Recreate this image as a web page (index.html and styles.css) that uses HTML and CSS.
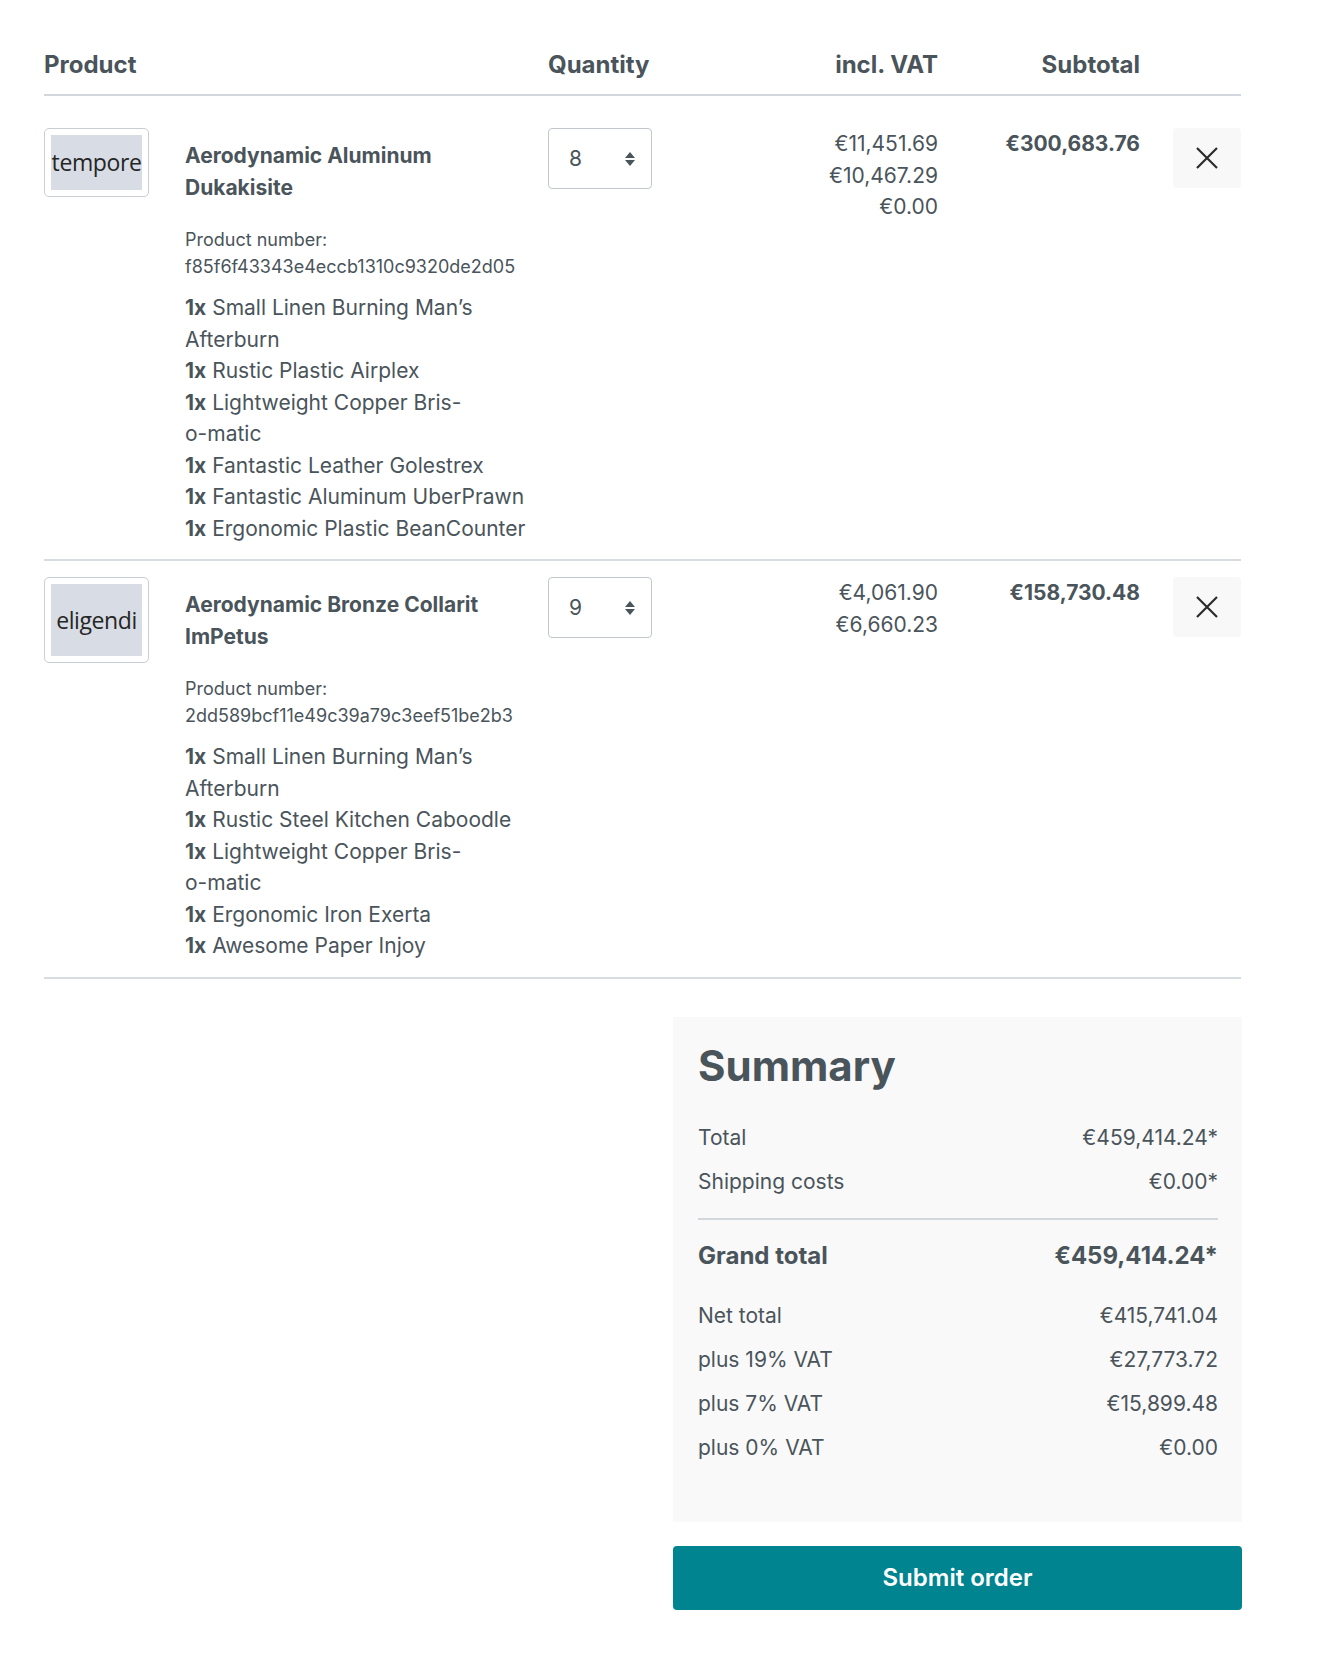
FILE: index.html
```html
<!DOCTYPE html>
<html lang="en">
<head>
<meta charset="UTF-8">
<title>Checkout</title>
<link rel="stylesheet" href="styles.css">
</head>
<body>
<div class="page">
<div class="cart">
<div class="cart-header">
<div>Product</div>
<div>Quantity</div>
<div class="num">incl. VAT</div>
<div class="num">Subtotal</div>
<div></div>
</div>

<div class="line-item">
<div class="item-product">
<div class="thumb thumb-short"><span>tempore</span></div>
<div class="details">
<div class="item-name">Aerodynamic Aluminum Dukakisite</div>
<div class="item-number">Product number:<br>f85f6f43343e4eccb1310c9320de2d05</div>
<ul class="bundle">
<li><b>1x</b> Small Linen Burning Man’s Afterburn</li>
<li><b>1x</b> Rustic Plastic Airplex</li>
<li><b>1x</b> Lightweight Copper Bris-<span class="nowrap">o-matic</span></li>
<li><b>1x</b> Fantastic Leather Golestrex</li>
<li><b>1x</b> Fantastic Aluminum UberPrawn</li>
<li><b>1x</b> Ergonomic Plastic BeanCounter</li>
</ul>
</div>
</div>
<div class="item-qty">
<div class="qty-select">8
<svg width="12" height="16" viewBox="0 0 12 16"><path d="M1 7 6 1l5 6zM1 9l5 6 5-6z" fill="#4a545b"/></svg>
</div>
</div>
<div class="item-price">€11,451.69<br>€10,467.29<br>€0.00</div>
<div class="item-total">€300,683.76</div>
<div class="item-remove">
<button type="button" class="btn-remove">
<svg width="24" height="24" viewBox="0 0 24 24"><path d="M2 2l20 20M22 2 2 22" stroke="#2b2b2b" stroke-width="2.2" fill="none"/></svg>
</button>
</div>
</div>

<div class="line-item">
<div class="item-product">
<div class="thumb thumb-tall"><span>eligendi</span></div>
<div class="details">
<div class="item-name">Aerodynamic Bronze Collarit ImPetus</div>
<div class="item-number">Product number:<br>2dd589bcf11e49c39a79c3eef51be2b3</div>
<ul class="bundle">
<li><b>1x</b> Small Linen Burning Man’s Afterburn</li>
<li><b>1x</b> Rustic Steel Kitchen Caboodle</li>
<li><b>1x</b> Lightweight Copper Bris-<span class="nowrap">o-matic</span></li>
<li><b>1x</b> Ergonomic Iron Exerta</li>
<li><b>1x</b> Awesome Paper Injoy</li>
</ul>
</div>
</div>
<div class="item-qty">
<div class="qty-select">9
<svg width="12" height="16" viewBox="0 0 12 16"><path d="M1 7 6 1l5 6zM1 9l5 6 5-6z" fill="#4a545b"/></svg>
</div>
</div>
<div class="item-price">€4,061.90<br>€6,660.23</div>
<div class="item-total">€158,730.48</div>
<div class="item-remove">
<button type="button" class="btn-remove">
<svg width="24" height="24" viewBox="0 0 24 24"><path d="M2 2l20 20M22 2 2 22" stroke="#2b2b2b" stroke-width="2.2" fill="none"/></svg>
</button>
</div>
</div>
</div>

<div class="summary-wrap">
<div class="summary">
<h2>Summary</h2>
<div class="sum-row"><span>Total</span><span>€459,414.24*</span></div>
<div class="sum-row"><span>Shipping costs</span><span>€0.00*</span></div>
<hr>
<div class="sum-row sum-grand"><span>Grand total</span><span>€459,414.24*</span></div>
<div class="sum-tax">
<div class="sum-row"><span>Net total</span><span>€415,741.04</span></div>
<div class="sum-row"><span>plus 19% VAT</span><span>€27,773.72</span></div>
<div class="sum-row"><span>plus 7% VAT</span><span>€15,899.48</span></div>
<div class="sum-row"><span>plus 0% VAT</span><span>€0.00</span></div>
</div>
</div>
<button type="button" class="btn-order">Submit order</button>
</div>
</div>
</body>
</html>
```

FILE: styles.css
```css
html, body { margin: 0; padding: 0; }
body { font-family: Inter, "Noto Sans", sans-serif; font-size: 21px; line-height: 1.5; color: #4a545b; background: #fff; }
.page { width: 1197px; padding: 49px 0 60px 44px; }
.nowrap { white-space: nowrap; }

/* cart table */
.cart-header, .line-item { display: grid; grid-template-columns: 504px 190px 200px 202px 1fr; }
.cart-header { font-size: 24px; font-weight: 700; line-height: 32px; padding-bottom: 13px; border-bottom: 2px solid #d1d7dc; margin-bottom: 16px; }
.cart-header .num { text-align: right; }
.line-item { padding: 16px 0 15px; border-bottom: 2px solid #d7dce0; }

.item-product { display: flex; }
.thumb { width: 105px; box-sizing: border-box; border: 1.5px solid #c9ced3; border-radius: 5px; padding: 6px; flex-shrink: 0; }
.thumb span { display: flex; align-items: center; justify-content: center; height: 100%; background: #d8dce4; color: #262626; font-family: "Open Sans", sans-serif; font-size: 23px; letter-spacing: -0.4px; overflow: hidden; white-space: nowrap; }
.thumb-short { height: 69px; }
.thumb-tall { height: 86px; }

.details { margin-left: 36px; width: 352px; }
.item-name { font-weight: 700; padding-top: 12px; }
.item-number { font-size: 18px; line-height: 27px; margin-top: 23px; }
.bundle { list-style: none; margin: 12px 0 0; padding: 0; }
.bundle b { font-weight: 700; }

.qty-select { width: 104px; height: 61px; box-sizing: border-box; border: 1.5px solid #c1c7cd; border-radius: 4px; padding: 0 15px 0 20px; display: flex; align-items: center; justify-content: space-between; }
.item-price { text-align: right; }
.item-total { text-align: right; font-weight: 700; }
.item-remove { display: flex; justify-content: flex-end; align-items: flex-start; }
.btn-remove { width: 68px; height: 60px; border: none; border-radius: 4px; background: #f8f8f8; display: flex; align-items: center; justify-content: center; padding: 0; cursor: pointer; }

/* summary */
.summary-wrap { width: 569px; margin: 38px -1px 0 auto; }
.summary { background: #f9f9f9; padding: 25px 24px 58px 25px; }
.summary h2 { font-size: 42px; line-height: 48px; font-weight: 700; margin: 0 0 32px; }
.sum-row { display: flex; justify-content: space-between; line-height: 32px; margin-top: 12px; }
.summary h2 + .sum-row { margin-top: 0; }
.summary hr { border: none; border-top: 2px solid #d1d7dc; margin: 20px 0 18px; }
.sum-grand { font-size: 24px; line-height: 36px; font-weight: 700; margin-top: 0; }
.sum-tax { margin-top: 26px; }
.sum-tax .sum-row:first-child { margin-top: 0; }

.btn-order { display: block; width: 100%; height: 64px; margin-top: 24px; border: none; border-radius: 4px; background: #008490; color: #fff; font-family: Inter, sans-serif; font-size: 24px; font-weight: 600; cursor: pointer; }
```
